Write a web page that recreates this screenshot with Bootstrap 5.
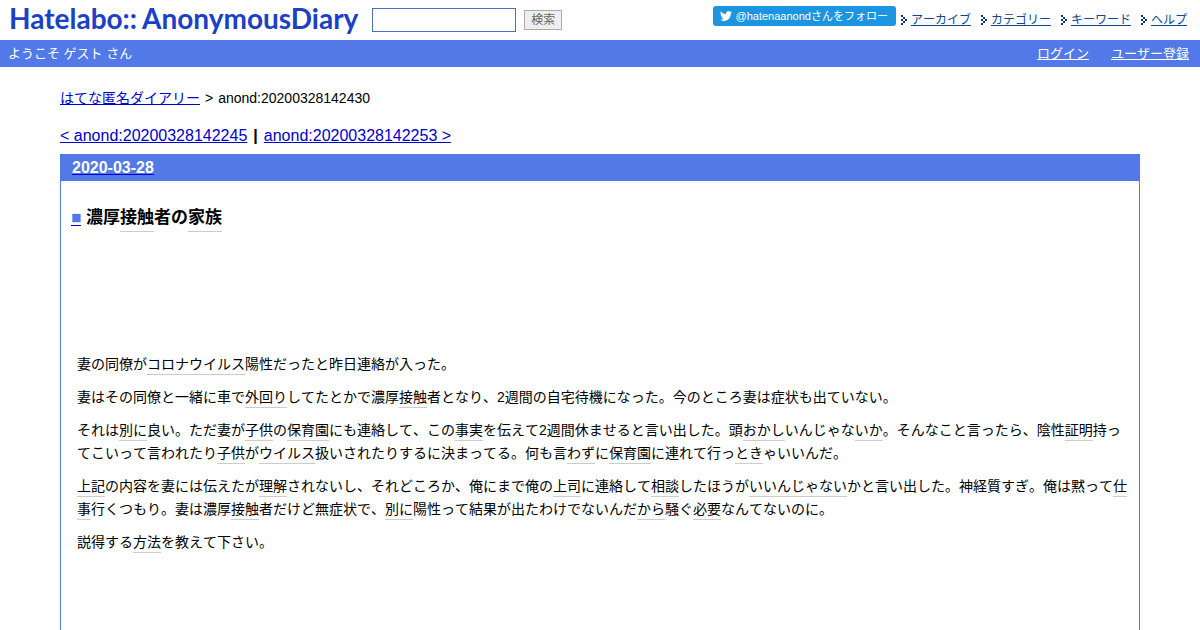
<!DOCTYPE html>
<html lang="ja">
<head>
<meta charset="utf-8">
<meta name="viewport" content="width=device-width, initial-scale=1">
<title>濃厚接触者の家族</title>
<link href="https://cdn.jsdelivr.net/npm/bootstrap@5.3.0/dist/css/bootstrap.min.css" rel="stylesheet">
<style>
  body { font-family: "Liberation Sans", "Noto Sans CJK JP", sans-serif; font-size: 14px; line-height: 23px; color: #000; font-kerning: none; }
  a { color: #0000cc; }
  .site-head { height: 40px; padding: 0 13px 0 9px; }
  .site-logo { font: 700 28px/36px Lato, sans-serif; color: #1a41c6; gap: 5px; padding-bottom: 4px; }
  .site-logo:hover { color: #1a41c6; }
  .search-box { width: 144px; height: 24px; border: 1px solid #4f6fc8; padding: 0 4px; margin-left: 14px; }
  .search-btn { width: 38px; height: 20px; border: 1px solid #aaa; background: #eee; color: #666; font-size: 12px; line-height: 16px; padding: 0; }
  .follow-btn { height: 20px; margin-bottom: 8px; padding: 0 8px 0 7px; border-radius: 3px; background: #1b95e0; color: #fff; font-size: 11px; line-height: 20px; gap: 4px; }
  .menu-links { font-size: 12px; line-height: 40px; gap: 10px; margin-left: 5px; }
  .menu-links a { color: #0d4692; }
  .menu-links svg { margin-right: 4px; }
  .welcome-bar { background: #5279e7; color: #fff; font-size: 13px; line-height: 27px; padding: 0 11px 0 8px; }
  .welcome-bar a { color: #fff; }
  .welcome-bar nav { gap: 22px; }
  .page-body { padding: 20px 60px 0; }
  .trail { margin-bottom: 14px; gap: 5px; }
  .pager { font-size: 16px; margin-bottom: 7px; gap: 6px; }
  .day { border: 1px solid #5279e7; border-bottom: 0; }
  .day-title { background: #5279e7; font-size: 16px; line-height: 26px; padding-left: 11px; }
  .day-title span { color: #fff; }
  .entry { padding: 25px 10px 0; }
  .entry-title { font-size: 17px; line-height: 24px; margin-bottom: 123px; }
  .anchor-mark { margin-right: 5px; }
  .anchor-mark svg { border-bottom: 1px solid #0000cc; vertical-align: -3px; }
  .entry p { margin: 0 0 10px 6px; }
  .kw { color: inherit; text-decoration: underline 1px #ccc; text-underline-offset: 5px; text-decoration-skip-ink: none; }
  .entry-title .kw { text-underline-offset: 8px; }
  .kw:hover { color: inherit; }
</style>
</head>
<body class="d-flex flex-column min-vh-100">
<header>
  <div class="site-head d-flex align-items-center">
    <a href="#" class="site-logo d-flex text-decoration-none"><span>Hatelabo::</span><span>AnonymousDiary</span></a>
    <form class="d-flex align-items-center gap-2">
      <input class="search-box" type="text" aria-label="検索">
      <button class="search-btn" type="button">検索</button>
    </form>
    <a href="#" class="follow-btn d-flex align-items-center ms-auto text-decoration-none">
      <svg width="12" height="12" viewBox="0 0 24 24" fill="#fff" aria-hidden="true"><path d="M23.95 4.57a10 10 0 0 1-2.82.77 4.96 4.96 0 0 0 2.16-2.72c-.95.55-2 .95-3.13 1.18a4.92 4.92 0 0 0-8.38 4.48C7.69 8.1 4.07 6.13 1.64 3.16a4.82 4.82 0 0 0-.67 2.48c0 1.71.87 3.21 2.19 4.1a4.9 4.9 0 0 1-2.23-.62v.06a4.92 4.92 0 0 0 3.95 4.83 5 5 0 0 1-2.21.08 4.94 4.94 0 0 0 4.6 3.42A9.87 9.87 0 0 1 0 19.54a14 14 0 0 0 7.55 2.21c9.05 0 14-7.5 14-13.98 0-.21 0-.42-.02-.63a9.94 9.94 0 0 0 2.42-2.57z"/></svg>
      <span>@hatenaanondさんをフォロー</span>
    </a>
    <nav class="menu-links d-flex">
      <span class="d-flex align-items-center"><svg width="6" height="10" viewBox="0 0 6 10" aria-hidden="true"><path fill="#0d3570" d="M0 0h2v2H0zM2 2h2v2H2zM4 4h2v2H4zM2 6h2v2H2zM0 8h2v2H0zM0 4h2v2H0z"/></svg><a href="#">アーカイブ</a></span>
      <span class="d-flex align-items-center"><svg width="6" height="10" viewBox="0 0 6 10" aria-hidden="true"><path fill="#0d3570" d="M0 0h2v2H0zM2 2h2v2H2zM4 4h2v2H4zM2 6h2v2H2zM0 8h2v2H0zM0 4h2v2H0z"/></svg><a href="#">カテゴリー</a></span>
      <span class="d-flex align-items-center"><svg width="6" height="10" viewBox="0 0 6 10" aria-hidden="true"><path fill="#0d3570" d="M0 0h2v2H0zM2 2h2v2H2zM4 4h2v2H4zM2 6h2v2H2zM0 8h2v2H0zM0 4h2v2H0z"/></svg><a href="#">キーワード</a></span>
      <span class="d-flex align-items-center"><svg width="6" height="10" viewBox="0 0 6 10" aria-hidden="true"><path fill="#0d3570" d="M0 0h2v2H0zM2 2h2v2H2zM4 4h2v2H4zM2 6h2v2H2zM0 8h2v2H0zM0 4h2v2H0z"/></svg><a href="#">ヘルプ</a></span>
    </nav>
  </div>
  <div class="welcome-bar d-flex justify-content-between">
    <span>ようこそ ゲスト さん</span>
    <nav class="d-flex"><a href="#">ログイン</a><a href="#">ユーザー登録</a></nav>
  </div>
</header>
<main class="page-body d-flex flex-column flex-grow-1">
  <div class="trail d-flex flex-wrap"><a href="#">はてな匿名ダイアリー</a><span>&gt;</span><span>anond:20200328142430</span></div>
  <div class="pager d-flex flex-wrap"><a href="#">&lt; anond:20200328142245</a><b>|</b><a href="#">anond:20200328142253 &gt;</a></div>
  <section class="day flex-grow-1">
    <h2 class="day-title fw-bold mb-0"><a href="#"><span>2020-03-28</span></a></h2>
    <article class="entry">
      <h3 class="entry-title fw-bold"><a href="#" class="anchor-mark" aria-label="permalink"><svg width="10" height="14" viewBox="0 0 10 14"><path fill="#5279e7" d="M1 2h9v9H1z"/></svg></a>濃厚<a class="kw" href="#">接触</a>者の<a class="kw" href="#">家族</a></h3>
      <p>妻の同僚が<a class="kw" href="#">コロナウイルス</a>陽性だったと昨日連絡が入った。</p>
      <p>妻はその同僚と一緒に車で<a class="kw" href="#">外回り</a>してたとかで濃厚<a class="kw" href="#">接触</a>者となり、2週間の自宅待機になった。今のところ妻は症状も出ていない。</p>
      <p>それは<a class="kw" href="#">別に</a>良い。ただ妻が<a class="kw" href="#">子供</a>の<a class="kw" href="#">保育園</a>にも連絡して、この<a class="kw" href="#">事実</a>を伝えて2週間休ませると言い出した。頭<a class="kw" href="#">おかし</a>いんじゃな<a class="kw" href="#">いか</a>。そんなこと言ったら、陰性<a class="kw" href="#">証明</a>持ってこいって言われたり<a class="kw" href="#">子供</a>が<a class="kw" href="#">ウイルス</a>扱いされたりするに決まってる。何も言<a class="kw" href="#">わず</a>に<a class="kw" href="#">保育園</a>に連れて行っ<a class="kw" href="#">とき</a>ゃいいんだ。</p>
      <p><a class="kw" href="#">上記</a>の内容を妻には伝えたが<a class="kw" href="#">理解</a>されないし、それどころか、俺にまで俺の<a class="kw" href="#">上司</a>に連絡して<a class="kw" href="#">相談</a>したほうが<a class="kw" href="#">いいんじゃない</a>かと言い出した。神経質すぎ。俺は黙って<a class="kw" href="#">仕事</a>行くつもり。妻は濃厚<a class="kw" href="#">接触</a>者だけど無症状で、<a class="kw" href="#">別に</a>陽性って結果が出たわけでないんだ<a class="kw" href="#">から</a>騒ぐ<a class="kw" href="#">必要</a>なんてないのに。</p>
      <p>説得する<a class="kw" href="#">方法</a>を教えて下さい。</p>
    </article>
  </section>
</main>
<script src="https://cdn.jsdelivr.net/npm/bootstrap@5.3.0/dist/js/bootstrap.bundle.min.js"></script>
</body>
</html>
